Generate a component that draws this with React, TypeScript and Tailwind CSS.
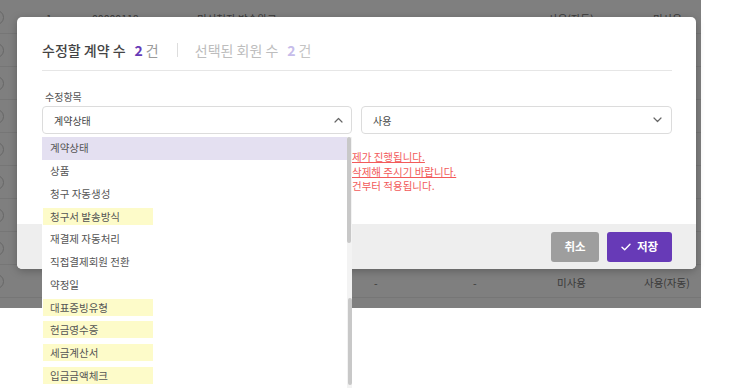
import React from "react";

const items: { label: string; hl?: boolean; selected?: boolean }[] = [
  { label: "계약상태", selected: true },
  { label: "상품" },
  { label: "청구 자동생성" },
  { label: "청구서 발송방식", hl: true },
  { label: "재결제 자동처리" },
  { label: "직접결제회원 전환" },
  { label: "약정일" },
  { label: "대표증빙유형", hl: true },
  { label: "현금영수증", hl: true },
  { label: "세금계산서", hl: true },
  { label: "입금금액체크", hl: true },
];

function ChevronUp() {
  return (
    <svg width="9" height="6" viewBox="0 0 9 6" fill="none">
      <path d="M1 5L4.5 1.5L8 5" stroke="#666" strokeWidth="1.2" strokeLinecap="round" strokeLinejoin="round" />
    </svg>
  );
}

function ChevronDown() {
  return (
    <svg width="9" height="6" viewBox="0 0 9 6" fill="none">
      <path d="M1 1L4.5 4.5L8 1" stroke="#666" strokeWidth="1.2" strokeLinecap="round" strokeLinejoin="round" />
    </svg>
  );
}

function BgRow({ children }: { children?: React.ReactNode }) {
  return (
    <div className="relative flex h-[33px] items-center border-b border-[#767676] text-[10.5px] text-[#3a3a3a] whitespace-nowrap">
      <span className="absolute -left-[11px] top-[9px] h-[15px] w-[15px] rounded-full border border-[#676767]" />
      {children}
    </div>
  );
}

export default function App() {
  return (
    <div className="relative h-[388px] w-[731px] overflow-hidden bg-white [font-family:'Noto_Sans_CJK_KR','Noto_Sans',sans-serif]">
      {/* dimmed page behind */}
      <div className="h-[308px] w-[701px] overflow-hidden bg-[#7f7f7f] pt-px">
        <BgRow>
          <span className="ml-[46px] w-[46px] pt-[4px]">1</span>
          <span className="w-[105px] pt-[4px]">00000118</span>
          <span className="w-[351px] pt-[4px]">미신청자 발송완료</span>
          <span className="w-[105px] pt-[4px]">사용(자동)</span>
          <span className="pt-[4px]">미사용</span>
        </BgRow>
        <BgRow />
        <BgRow />
        <BgRow />
        <BgRow />
        <BgRow />
        <BgRow />
        <BgRow />
        <BgRow>
          <span className="ml-[374px] w-[99px] pt-[4px]">-</span>
          <span className="w-[84px] pt-[4px]">-</span>
          <span className="w-[87px] pt-[4px]">미사용</span>
          <span className="pt-[4px]">사용(자동)</span>
        </BgRow>
      </div>

      {/* modal */}
      <div className="absolute left-[17px] top-[17px] flex h-[252px] w-[679px] flex-col overflow-hidden rounded-[5px] bg-white shadow-[0_2px_8px_rgba(0,0,0,0.25)]">
        <div className="flex-1 pl-[25px] pr-[24px] pt-[23px]">
          <div className="flex h-[20px] items-center text-[14px] leading-[20px]">
            <span className="font-medium text-[#444]">수정할 계약 수</span>
            <span className="ml-[9px] font-bold text-[#673ab7]">2</span>
            <span className="ml-[3px] text-[#9a9a9a]">건</span>
            <span className="ml-[18px] mr-[17px] h-[14px] w-px bg-[#dddddd]" />
            <span className="text-[#bdbdbd]">선택된 회원 수</span>
            <span className="ml-[9px] font-bold text-[#c6bcea]">2</span>
            <span className="ml-[3px] text-[#c4c4c4]">건</span>
          </div>
          <div className="mt-[10px] h-px bg-[#e6e6e6]" />
          <div className="mt-[19px] pl-[3px] text-[10px] leading-[14px] text-[#555]">수정항목</div>
          <div className="mt-[2px] flex gap-[9px]">
            <div className="flex h-[28px] w-[310px] items-center justify-between rounded-[4px] border border-[#dcdcdc] pl-[11px] pr-[8px] text-[10px] text-[#444]">
              <span>계약상태</span>
              <ChevronUp />
            </div>
            <div className="flex h-[28px] flex-1 items-center justify-between rounded-[4px] border border-[#dcdcdc] pl-[11px] pr-[9px] text-[10px] text-[#444]">
              <span>사용</span>
              <ChevronDown />
            </div>
          </div>
          <div className="mt-[16px] pl-[310px] text-[10.5px] leading-[14.5px] text-[#f25a5a] whitespace-nowrap">
            <div className="underline">제가 진행됩니다.</div>
            <div className="underline">삭제해 주시기 바랍니다.</div>
            <div>건부터 적용됩니다.</div>
          </div>
        </div>
        <div className="flex h-[45px] items-center justify-end gap-[8px] bg-[#eeeeee] pr-[24px]">
          <button className="flex h-[30px] w-[48px] items-center justify-center rounded-[3px] bg-[#9e9e9e] text-[11.5px] font-bold text-white">
            취소
          </button>
          <button className="flex h-[30px] w-[65px] items-center justify-center gap-[6px] rounded-[3px] bg-[#673ab7] text-[11.5px] font-bold text-white">
            <svg width="10" height="8" viewBox="0 0 10 8" fill="none">
              <path d="M1 4.2L3.7 6.8L9 1.2" stroke="white" strokeWidth="1.4" strokeLinecap="round" strokeLinejoin="round" />
            </svg>
            저장
          </button>
        </div>
      </div>

      {/* open dropdown list */}
      <div className="absolute left-[42px] top-[135px] h-[253px] w-[310px] overflow-hidden bg-white pt-[2px]">
        {items.map((it) => (
          <div
            key={it.label}
            className={`flex h-[22.7px] w-[305px] items-center pl-[8px] text-[10.5px] text-[#555] ${it.selected ? "bg-[#e4e0f1]" : ""}`}
          >
            {it.hl ? (
              <span className="-ml-[7px] inline-block h-[17px] w-[110px] bg-[#fdfbc9] pl-[7px] leading-[17px]">{it.label}</span>
            ) : (
              <span>{it.label}</span>
            )}
          </div>
        ))}
        <div className="absolute bottom-0 right-0 top-[2px] w-[5px] bg-[#f3f3f3]">
          <div className="absolute left-0 top-0 h-[106px] w-[4px] rounded-[2px] bg-[#c8c8c8]" />
          <div className="absolute left-[1px] top-[161px] h-[87px] w-[4px] rounded-[2px] bg-[#c8c8c8]" />
        </div>
      </div>
    </div>
  );
}
